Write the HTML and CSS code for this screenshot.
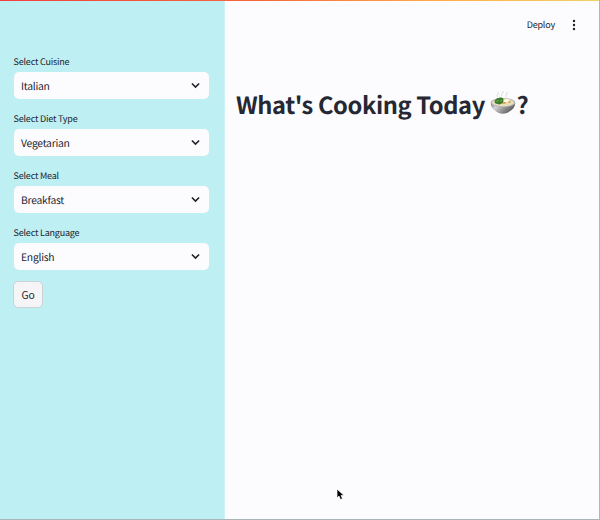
FILE: index.html
```html
<!DOCTYPE html>
<html lang="en">
<head>
<meta charset="utf-8">
<title>What's Cooking Today</title>
<link rel="stylesheet" href="styles.css">
</head>
<body>
<div class="app">
  <div class="decoration"></div>
  <aside class="sidebar">
    <div class="field"><span class="label">Select Cuisine</span>
      <div class="select"><span>Italian</span><svg class="chevron" viewBox="0 0 8 6"><path d="M.8 1.2 4 4.4 7.200 1.200"/></svg></div></div>
    <div class="field"><span class="label">Select Diet Type</span>
      <div class="select"><span>Vegetarian</span><svg class="chevron" viewBox="0 0 8 6"><path d="M.8 1.2 4 4.4 7.200 1.200"/></svg></div></div>
    <div class="field"><span class="label">Select Meal</span>
      <div class="select"><span>Breakfast</span><svg class="chevron" viewBox="0 0 8 6"><path d="M.8 1.2 4 4.4 7.200 1.200"/></svg></div></div>
    <div class="field"><span class="label">Select Language</span>
      <div class="select"><span>English</span><svg class="chevron" viewBox="0 0 8 6"><path d="M.8 1.2 4 4.4 7.200 1.200"/></svg></div></div>
    <button class="go">Go</button>
  </aside>
  <main class="main">
    <header class="toolbar">
      <span class="deploy">Deploy</span>
      <svg class="dots" viewBox="0 0 4 12"><circle cx="2" cy="2" r="1.2"/><circle cx="2" cy="6" r="1.2"/><circle cx="2" cy="10" r="1.2"/></svg>
    </header>
    <h1 class="title"><span>What's Cooking Today</span><svg class="bowl" viewBox="0 0 26 24">
      <defs><linearGradient id="metal" x1="0" x2="1" y1="0" y2="0.4"><stop offset="0" stop-color="#777"/><stop offset=".3" stop-color="#d4d4d4"/><stop offset=".65" stop-color="#929292"/><stop offset="1" stop-color="#5c5c5c"/></linearGradient></defs>
      <path class="steam" d="M8 6c-2-2 1-3 0-5M12 5c-2-2 2-3 1-5M16 6c-1-2 2-2 1-5"/>
      <path fill="url(#metal)" d="M.8 12c0 5 4 8 8 10q4 1.500 8 0c4-2 8.400-5 8.400-10z"/>
      <ellipse cx="13" cy="11.500" rx="12.300" ry="4.500" fill="#b9b9b7"/>
      <ellipse cx="13" cy="11.500" rx="10.900" ry="3.700" fill="#e9dfb9"/>
      <path fill="#3d7c2d" d="M4.500 11c0-2 2-4 4-4 2-.8 4-.5 5 1l-.5 4-3.500 1.500-4-1z"/>
      <path fill="#78aa45" d="m6 10 2-1 1 1-2 1zM10 9l2 0-1 2z"/>
      <path fill="#fff9e5" d="m14 9 3-1 3 1-2 2-4 0z"/>
      <path fill="#dc8933" d="m12 12 3-1 1 1-2 1zM18 11l2-1 1 1-2 1z"/>
    </svg><span>?</span></h1>
    <svg class="cursor" viewBox="0 0 9 13"><path d="M1 1v9l2-2 1.500 3.500 2-1L5 7.500h3z"/></svg>
  </main>
</div>
</body>
</html>
```
FILE: styles.css
```css
* { box-sizing: border-box; }
body { margin: 0; font-family: "Noto Sans CJK SC", "Noto Sans", sans-serif; color: #22242e; text-rendering: geometricPrecision; }
.app { position: relative; display: flex; width: 600px; height: 520px; background: #fcfbfd; border-right: 1px solid #b5b5b8; border-bottom: 1px solid #a9b5b8; overflow: hidden; }
.decoration { position: absolute; top: 0; left: 0; right: 0; height: 1px; background: linear-gradient(90deg, #f43e3d, #f56b3c 45%, #ffb04a 75%, #eed264); }
.sidebar { display: flex; flex-direction: column; align-items: flex-start; width: 225px; padding: 54px 15px 0 13.500px; background: #bdeff3; border-right: 1px solid #ccf4f6; }
.field { width: 195.500px; height: 57px; }
.label { display: block; height: 18px; line-height: 16px; font-size: 9px; letter-spacing: -.19px; white-space: nowrap; }
.select { display: flex; align-items: center; justify-content: space-between; height: 27px; padding: 0 9.500px 0 7.500px; border-radius: 5px; background: #fcfbfd; font-size: 10.300px; letter-spacing: -.23px; line-height: 16px; }
.chevron { width: 9px; height: 7px; fill: none; stroke: #1e2027; stroke-width: 1.350; }
.go { width: 30px; height: 27px; margin: -1px 0 0 -.5px; padding: 0; border: 1px solid #cdd1d6; border-radius: 5px; background: #f5f4f7; color: #22242e; font: 10.300px/16px "Noto Sans CJK SC", sans-serif; letter-spacing: -.2px; }
.main { flex: 1; }
.toolbar { display: flex; align-items: center; justify-content: flex-end; gap: 17px; height: 49px; padding-right: 23px; }
.deploy { font-size: 9px; letter-spacing: -.18px; line-height: 14px; }
.dots { width: 4px; height: 12px; fill: #1e2027; }
.title { display: flex; align-items: center; height: 36px; margin: 37px 0 0 11px; font-size: 23.700px; font-weight: 700; letter-spacing: -.38px; line-height: 36px; color: #252733; white-space: nowrap; }
.bowl { width: 26px; height: 24px; margin: -2px 0 0 5.500px; }
.steam { fill: none; stroke: #cbcbcf; stroke-width: .8; }
.cursor { position: absolute; left: 336px; top: 488px; width: 9px; height: 13px; fill: #000; stroke: #fff; stroke-width: .7; }
```
